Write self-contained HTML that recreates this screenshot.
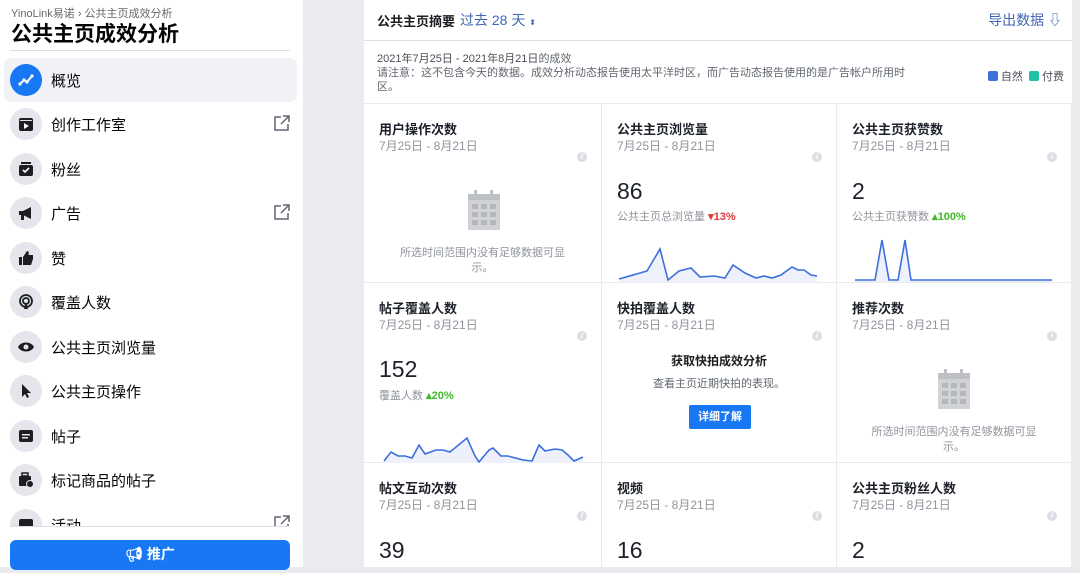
<!DOCTYPE html>
<html><head><meta charset="utf-8"><style>
*{box-sizing:border-box;margin:0;padding:0}
body{width:1080px;height:567px;overflow:hidden;background:#e9ebee;font-family:"Liberation Sans","Noto Sans CJK SC",sans-serif;position:relative;color:#1c1e21}
#side{position:absolute;left:0;top:0;width:303px;height:567px;background:#fff}
.crumb{position:absolute;left:11px;top:5px;font-size:11px;color:#65676b}
.title{position:absolute;left:11px;top:18px;font-size:21px;font-weight:bold;color:#050505}
.hr{position:absolute;left:10px;width:280px;height:1px;background:#dadde1}
.item{position:absolute;left:4px;width:293px;height:44px;border-radius:7px}
.item.sel{background:#f0f2f5}
.ic{position:absolute;left:6px;top:6px;width:32px;height:32px;border-radius:50%;background:#e4e6eb;display:flex;align-items:center;justify-content:center}
.item .t{position:absolute;left:47px;top:12px;font-size:15px;color:#050505}
.ext{position:absolute;right:7px;top:13px;width:17px;height:17px}
.btn{position:absolute;left:10px;top:540px;width:280px;height:30px;background:#1877f2;border-radius:6px;color:#fff;font-weight:bold;font-size:14px;text-align:center;line-height:28px}
#main{position:absolute;left:364px;top:0;width:708px;height:567px;background:#fff}
.hd{position:absolute;left:0;top:0;width:708px;height:41px;border-bottom:1px solid #dddfe2}
.cell{position:absolute;border-right:1px solid #e9ebee;border-bottom:1px solid #e9ebee}
.ct{position:absolute;left:15px;top:15px;font-size:13px;font-weight:bold;color:#1d2129}
.cd{position:absolute;left:15px;top:33px;font-size:12px;color:#90949c}
.info{position:absolute;right:14px;top:48px;width:10px;height:10px;border-radius:50%;background:#dcdee3;color:#fff;font-size:8px;font-style:italic;text-align:center;line-height:10px;font-weight:bold}
.num{position:absolute;left:15px;font-size:23px;color:#1d2129}
.sub{position:absolute;left:15px;font-size:11px;color:#90949c}
.nd{position:absolute;left:0;width:100%;text-align:center;font-size:11px;color:#90949c;line-height:15px}
</style></head><body>
<div id="side">
<div class="crumb">YinoLink易诺 › 公共主页成效分析</div>
<div class="title">公共主页成效分析</div>
<div class="hr" style="top:50px"></div>
<div class="item sel" style="top:58px"><div class="ic" style="background:#1877f2"><svg width="16" height="16" viewBox="0 0 16 16"><polyline points="2,12 6,8 9,10 14,4" fill="none" stroke="#fff" stroke-width="2"/><circle cx="2" cy="12" r="1.6" fill="#fff"/><circle cx="6" cy="8" r="1.6" fill="#fff"/><circle cx="9" cy="10" r="1.6" fill="#fff"/><circle cx="14" cy="4" r="1.6" fill="#fff"/></svg></div><span class="t">概览</span></div>
<div class="item" style="top:102px"><div class="ic"><svg width="16" height="16"><rect x="1" y="2" width="14" height="13" rx="2" fill="#1c1e21"/><rect x="2" y="4" width="12" height="1" fill="#e4e6eb"/><path d="M6 7v6l5-3z" fill="#fff"/></svg></div><span class="t">创作工作室</span><svg class="ext" viewBox="0 0 17 17"><path d="M8 2H2v13h13V9M10 1h6v6M16 1L8 9" fill="none" stroke="#606770" stroke-width="1.5"/></svg></div>
<div class="item" style="top:147px"><div class="ic"><svg width="16" height="16"><rect x="1" y="4" width="14" height="11" rx="2" fill="#1c1e21"/><rect x="3" y="1" width="10" height="2" fill="#1c1e21"/><path d="M5 9l2 2 4-4" stroke="#fff" stroke-width="1.6" fill="none"/></svg></div><span class="t">粉丝</span></div>
<div class="item" style="top:191px"><div class="ic"><svg width="16" height="16"><path d="M1 6h4l8-4v12l-8-4H1z" fill="#1c1e21"/><rect x="3" y="10" width="3" height="5" fill="#1c1e21"/></svg></div><span class="t">广告</span><svg class="ext" viewBox="0 0 17 17"><path d="M8 2H2v13h13V9M10 1h6v6M16 1L8 9" fill="none" stroke="#606770" stroke-width="1.5"/></svg></div>
<div class="item" style="top:236px"><div class="ic"><svg width="16" height="16"><rect x="1" y="7" width="3" height="8" fill="#1c1e21"/><path d="M5 7l4-6c2 0 2 2 1.5 4H15v4l-2 6H5z" fill="#1c1e21"/></svg></div><span class="t">赞</span></div>
<div class="item" style="top:280px"><div class="ic"><svg width="16" height="16"><circle cx="8" cy="7" r="6" fill="none" stroke="#1c1e21" stroke-width="1.8"/><circle cx="8" cy="7" r="3" fill="none" stroke="#1c1e21" stroke-width="1.8"/><path d="M6 15l2-7 2 7z" fill="#1c1e21"/></svg></div><span class="t">覆盖人数</span></div>
<div class="item" style="top:325px"><div class="ic"><svg width="18" height="12"><path d="M1 6C4 0 14 0 17 6 14 12 4 12 1 6z" fill="#1c1e21"/><circle cx="9" cy="6" r="2.5" fill="#e4e6eb"/></svg></div><span class="t">公共主页浏览量</span></div>
<div class="item" style="top:369px"><div class="ic"><svg width="14" height="16"><path d="M3 1v13l3-3 2 4 2-1-2-4h4z" fill="#1c1e21"/></svg></div><span class="t">公共主页操作</span></div>
<div class="item" style="top:414px"><div class="ic"><svg width="16" height="14"><rect x="1" y="1" width="14" height="12" rx="2" fill="#1c1e21"/><rect x="4" y="5" width="8" height="1.5" fill="#e4e6eb"/><rect x="4" y="8" width="6" height="1.5" fill="#e4e6eb"/></svg></div><span class="t">帖子</span></div>
<div class="item" style="top:458px"><div class="ic"><svg width="16" height="16"><rect x="1" y="4" width="12" height="10" rx="1" fill="#1c1e21"/><rect x="4" y="1" width="6" height="3" fill="none" stroke="#1c1e21" stroke-width="1.5"/><circle cx="12" cy="12" r="3.5" fill="#1c1e21" stroke="#e4e6eb"/></svg></div><span class="t">标记商品的帖子</span></div>
<div style="position:absolute;left:0;top:503px;width:303px;height:23px;overflow:hidden">
<div class="item" style="top:0"><div class="ic"><svg width="16" height="16"><rect x="1" y="2" width="14" height="13" rx="2" fill="#1c1e21"/></svg></div><span class="t">活动</span><svg class="ext" style="top:12px" viewBox="0 0 17 17"><path d="M8 2H2v13h13V9M10 1h6v6M16 1L8 9" fill="none" stroke="#606770" stroke-width="1.5"/></svg></div></div>
<div class="hr" style="top:526px"></div>
<div class="btn">&#x1F4E2;&#xFE0E; 推广</div>
</div>
<div id="main">
<div class="hd"><span style="position:absolute;left:13px;top:11px;font-size:13px;font-weight:bold">公共主页摘要</span><span style="position:absolute;left:96px;top:10px;font-size:14px;color:#4267b2">过去 28 天 <span style="font-size:8px">⬍</span></span><span style="position:absolute;right:10px;top:10px;font-size:14px;color:#4267b2">导出数据 ⇩</span></div>
<div style="position:absolute;left:13px;top:52px;font-size:11px;color:#606770;line-height:14px;width:540px"><span style="color:#4b4f56">2021年7月25日 - 2021年8月21日</span>的成效<br>请注意：这不包含今天的数据。成效分析动态报告使用太平洋时区，而广告动态报告使用的是广告帐户所用时区。</div>
<div style="position:absolute;right:8px;top:68px;font-size:11px;color:#4b4f56"><span style="display:inline-block;width:10px;height:10px;background:#3b6fdb;border-radius:2px;vertical-align:-1px"></span> 自然 &nbsp;<span style="display:inline-block;width:10px;height:10px;background:#1fc2a5;border-radius:2px;vertical-align:-1px"></span> 付费</div>
<div style="position:absolute;left:0;top:103px;width:708px;height:1px;background:#e9ebee"></div>

<div class="cell" style="left:0;top:104px;width:238px;height:179px"><div class="ct">用户操作次数</div><div class="cd">7月25日 - 8月21日</div><div class="info">i</div>
<svg style="position:absolute;left:104px;top:86px" width="32" height="40"><rect x="0" y="4" width="32" height="36" fill="#d0d2d6"/><rect x="0" y="4" width="32" height="6" fill="#bcc0c4"/><rect x="6" y="0" width="3" height="8" fill="#bcc0c4"/><rect x="22" y="0" width="3" height="8" fill="#bcc0c4"/><g fill="#b4b7bc"><rect x="4" y="14" width="6" height="5"/><rect x="13" y="14" width="6" height="5"/><rect x="22" y="14" width="6" height="5"/><rect x="4" y="22" width="6" height="5"/><rect x="13" y="22" width="6" height="5"/><rect x="22" y="22" width="6" height="5"/><rect x="4" y="30" width="6" height="5"/><rect x="13" y="30" width="6" height="5"/><rect x="22" y="30" width="6" height="5"/></g></svg>
<div class="nd" style="top:142px">所选时间范围内没有足够数据可显<br>示。</div></div>
<div class="cell" style="left:238px;top:104px;width:235px;height:179px"><div class="ct">公共主页浏览量</div><div class="cd">7月25日 - 8月21日</div><div class="info">i</div><div class="num" style="top:74px">86</div><div class="sub" style="top:104px">公共主页总浏览量 <b style="color:#e0393e">▾13%</b></div>
<svg style="position:absolute;left:0;top:130px" width="235" height="48"><path d="M17 45L45 37 58 15 66 46 77 37 89 34 98 43 112 42 123 44 131 31 143 39 154 44 162 42 170 44 179 41 190 33 196 36 202 36 209 41 215 42V48H17z" fill="#eef0fb"/><polyline points="17,45 45,37 58,15 66,46 77,37 89,34 98,43 112,42 123,44 131,31 143,39 154,44 162,42 170,44 179,41 190,33 196,36 202,36 209,41 215,42" fill="none" stroke="#3b6fdb" stroke-width="1.6"/></svg></div>
<div class="cell" style="left:473px;top:104px;width:235px;height:179px"><div class="ct">公共主页获赞数</div><div class="cd">7月25日 - 8月21日</div><div class="info">i</div><div class="num" style="top:74px">2</div><div class="sub" style="top:104px">公共主页获赞数 <b style="color:#42b72a">▴100%</b></div>
<svg style="position:absolute;left:0;top:130px" width="235" height="48"><path d="M18 46H38L45 6 52 46H61L68 6 74 46H215V48H18z" fill="#eef0fb"/><polyline points="18,46 38,46 45,6 52,46 61,46 68,6 74,46 215,46" fill="none" stroke="#3b6fdb" stroke-width="1.6"/></svg></div>

<div class="cell" style="left:0;top:283px;width:238px;height:180px"><div class="ct">帖子覆盖人数</div><div class="cd">7月25日 - 8月21日</div><div class="info">i</div><div class="num" style="top:73px">152</div><div class="sub" style="top:104px">覆盖人数 <b style="color:#42b72a">▴20%</b></div>
<svg style="position:absolute;left:0;top:140px" width="238" height="40"><path d="M20 38L27 29 34 33 41 33 48 35 55 22 61 31 72 27 79 27 86 29 103 15 111 33 115 39 125 27 129 25 137 33 144 33 159 37 168 38 175 22 181 28 191 26 198 27 204 32 210 38 219 34V40H20z" fill="#eef0fb"/><polyline points="20,38 27,29 34,33 41,33 48,35 55,22 61,31 72,27 79,27 86,29 103,15 111,33 115,39 125,27 129,25 137,33 144,33 159,37 168,38 175,22 181,28 191,26 198,27 204,32 210,38 219,34" fill="none" stroke="#3b6fdb" stroke-width="1.6"/></svg></div>
<div class="cell" style="left:238px;top:283px;width:235px;height:180px"><div class="ct">快拍覆盖人数</div><div class="cd">7月25日 - 8月21日</div><div class="info">i</div>
<div style="position:absolute;left:0;width:100%;top:69px;text-align:center;font-size:12px;font-weight:bold">获取快拍成效分析</div>
<div style="position:absolute;left:0;width:100%;top:92px;text-align:center;font-size:11px;color:#606770">查看主页近期快拍的表现。</div>
<div style="position:absolute;left:87px;top:122px;width:62px;height:24px;background:#1877f2;color:#fff;font-size:11px;font-weight:bold;text-align:center;line-height:24px;border-radius:2px">详细了解</div></div>
<div class="cell" style="left:473px;top:283px;width:235px;height:180px"><div class="ct">推荐次数</div><div class="cd">7月25日 - 8月21日</div><div class="info">i</div>
<svg style="position:absolute;left:101px;top:86px" width="32" height="40"><rect x="0" y="4" width="32" height="36" fill="#d0d2d6"/><rect x="0" y="4" width="32" height="6" fill="#bcc0c4"/><rect x="6" y="0" width="3" height="8" fill="#bcc0c4"/><rect x="22" y="0" width="3" height="8" fill="#bcc0c4"/><g fill="#b4b7bc"><rect x="4" y="14" width="6" height="5"/><rect x="13" y="14" width="6" height="5"/><rect x="22" y="14" width="6" height="5"/><rect x="4" y="22" width="6" height="5"/><rect x="13" y="22" width="6" height="5"/><rect x="22" y="22" width="6" height="5"/><rect x="4" y="30" width="6" height="5"/><rect x="13" y="30" width="6" height="5"/><rect x="22" y="30" width="6" height="5"/></g></svg>
<div class="nd" style="top:142px">所选时间范围内没有足够数据可显<br>示。</div></div>

<div class="cell" style="left:0;top:463px;width:238px;height:110px"><div class="ct">帖文互动次数</div><div class="cd">7月25日 - 8月21日</div><div class="info">i</div><div class="num" style="top:74px">39</div></div>
<div class="cell" style="left:238px;top:463px;width:235px;height:110px"><div class="ct">视频</div><div class="cd">7月25日 - 8月21日</div><div class="info">i</div><div class="num" style="top:74px">16</div></div>
<div class="cell" style="left:473px;top:463px;width:235px;height:110px"><div class="ct">公共主页粉丝人数</div><div class="cd">7月25日 - 8月21日</div><div class="info">i</div><div class="num" style="top:74px">2</div></div>
</div>
</body></html>
